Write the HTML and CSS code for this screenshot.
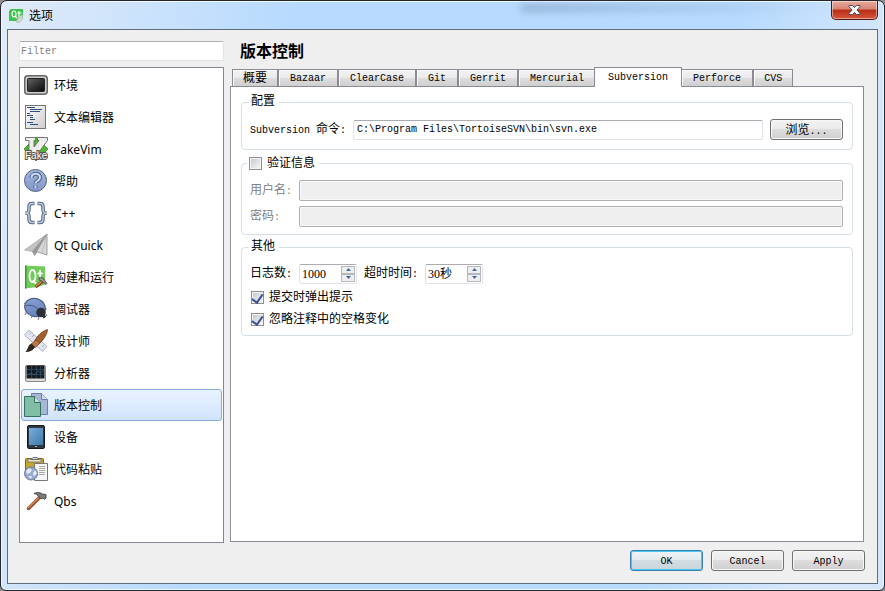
FILE: index.html
```html
<!DOCTYPE html>
<html lang="zh-CN">
<head>
  <meta charset="UTF-8">
  <meta name="viewport" content="width=device-width, initial-scale=1.0">
  <title>选项</title>
  <link rel="stylesheet" href="styles.css">
</head>
<body>
  <div class="window">
    <!-- Title bar -->
    <header class="titlebar">
      <svg class="app-icon" width="15" height="15" viewBox="0 0 15 15">
        <path d="M2 1h12v9l-3 3H0V3z" fill="#3fc34f"/>
        <ellipse cx="5" cy="6" rx="2" ry="3" fill="none" stroke="#fff" stroke-width="1.2"/>
        <path d="M6 8l2 2M10 3v6h2M8.500 5h4" fill="none" stroke="#fff" stroke-width="1.2"/>
        <path d="M14 6l-1 6-3 3-3-1 2-4z" fill="#d5d5cf" stroke="#aaa" stroke-width=".5"/>
      </svg>
      <span class="title">选项</span>
      <span class="glass-shade"></span>
      <button class="close" type="button" aria-label="关闭">
        <svg width="13" height="10" viewBox="0 0 13 10">
          <path d="M1 .5h3.500L6.500 2.500 8.500.5H12v1L9 5l3 3.500v1H8.500l-2-2-2 2H1v-1L4 5 1 1.500z" fill="#fff" stroke="#4d4a5c"/>
        </svg>
      </button>
    </header>

    <main class="client">
      <div class="content">
        <!-- Categories -->
        <aside class="sidebar">
          <input class="field filter" type="text" placeholder="Filter" aria-label="Filter">
          <ul class="categories">
            <li><a href="#">
              <svg width="24" height="24" viewBox="0 0 24 24">
                <defs><linearGradient id="screen" x2="1" y2="1"><stop stop-color="#666"/><stop offset=".5" stop-color="#333"/><stop offset="1" stop-color="#080808"/></linearGradient></defs>
                <rect x=".75" y="2.750" width="22.500" height="18.500" rx="3" fill="#ccc" stroke="#666" stroke-width="1.500"/>
                <rect x="3.500" y="5.500" width="17" height="13" rx="1" fill="url(#screen)" stroke="#222"/>
              </svg>
              <span>环境</span></a></li>
            <li><a href="#">
              <svg width="24" height="24" viewBox="0 0 24 24">
                <defs><linearGradient id="paper" x2="1" y2="1"><stop stop-color="#fff"/><stop offset="1" stop-color="#ccc"/></linearGradient></defs>
                <rect x="1.500" y=".5" width="20" height="23" fill="url(#paper)" stroke="#777"/>
                <path d="M3 2.500h8M6 4.500h12M6 6.500h10M3 8.500h3M3 10.500h6M6 12.500h3M6 14.500h5M3 17.500h6M6 19.500h8" stroke="#2a4d86"/>
              </svg>
              <span>文本编辑器</span></a></li>
            <li><a href="#">
              <svg width="24" height="24" viewBox="0 0 24 24">
                <path d="M12 0l12 12-12 12L0 12z" fill="#4cb830" stroke="#176b17" stroke-width=".6"/>
                <path d="M1.500.5h10v3H10v6.500L15 3.500h-1.500v-3h10v3L12 19H5V3.500H1.500z" fill="#eee" stroke="#666" stroke-width=".9"/>
                <text class="vim-label" x="1" y="22">Fake</text>
              </svg>
              <span>FakeVim</span></a></li>
            <li><a href="#">
              <svg width="24" height="24" viewBox="0 0 24 24">
                <defs><linearGradient id="help" y2="1" x2="0"><stop stop-color="#a3b6da"/><stop offset="1" stop-color="#8397c8"/></linearGradient></defs>
                <circle cx="11.500" cy="11.500" r="11" fill="url(#help)" stroke="#556483"/>
                <path d="M7.500 9C7.500 3.500 16 3.500 16 8.500c0 3.500-4.500 3-4.500 6M11.500 16.500v2.500" fill="none" stroke="#4a5f91" stroke-width="4"/>
                <path d="M7.500 9C7.500 3.500 16 3.500 16 8.500c0 3.500-4.500 3-4.500 6M11.500 16.500v2.500" fill="none" stroke="#d3def2" stroke-width="2"/>
              </svg>
              <span>帮助</span></a></li>
            <li><a href="#">
              <svg width="24" height="24" viewBox="0 0 24 24" fill="none">
                <path d="M10.500 2.500H8C5.500 2.500 5 4 5 6v2c0 2.500-.5 4-3.500 4C4.500 12 5 13.500 5 16v2c0 2 .5 3.500 3 3.500h2.500M13.500 2.500H16c2.500 0 3 1.500 3 3.500v2c0 2.500.5 4 3.500 4-3 0-3.500 1.500-3.500 4v2c0 2-.5 3.500-3 3.500h-2.500" stroke="#56657f" stroke-width="3.500"/>
                <path d="M10 2.500H8C5.500 2.500 5 4 5 6v2c0 2.500-.5 4-3 4 2.500 0 3 1.500 3 4v2c0 2 .5 3.500 3 3.500h2M14 2.500h2c2.500 0 3 1.500 3 3.500v2c0 2.500.5 4 3 4-2.500 0-3 1.500-3 4v2c0 2-.5 3.500-3 3.500h-2" stroke="#b9cbe8" stroke-width="1.500"/>
              </svg>
              <span>C++</span></a></li>
            <li><a href="#">
              <svg width="24" height="24" viewBox="0 0 24 24">
                <path d="M23 1L.5 17l8 1.500z" fill="#c4c4c4" stroke="#999" stroke-width=".6"/>
                <path d="M23 1L8.500 18.500l2 4 3-4z" fill="#9a9a9a" stroke="#888" stroke-width=".6"/>
                <path d="M23 1L12.500 18.500 23 22z" fill="#d8d8d8" stroke="#8c8c8c" stroke-width=".8"/>
                <path d="M23 1l-5 19" stroke="#b0b0b0" stroke-width=".7"/>
              </svg>
              <span>Qt Quick</span></a></li>
            <li><a href="#">
              <svg width="24" height="24" viewBox="0 0 24 24">
                <path d="M1 .5L21 1.500v18L14 22 1 23.500z" fill="#70cb59"/>
                <path d="M1 .5h1.500v23H1z" fill="#3c9a33"/>
                <ellipse cx="8.500" cy="11" rx="3" ry="6" fill="none" stroke="#fff" stroke-width="1.800"/>
                <path d="M9 15l3 4M16 5v8c0 2 1 3 2.500 2.500M13.500 8.500h5" fill="none" stroke="#fff" stroke-width="1.800"/>
                <path d="M20 15l-8.500 7" stroke="#7c371c" stroke-width="3"/>
                <path d="M19.500 15l-8 6.500" stroke="#e08c52" stroke-width="1.500"/>
                <path d="M15 12.500l4 .5 4 5.500-1 1-2-1.500-2-2-3-1z" fill="#999" stroke="#444" stroke-width=".8"/>
              </svg>
              <span>构建和运行</span></a></li>
            <li><a href="#">
              <svg width="24" height="24" viewBox="0 0 24 24">
                <defs><linearGradient id="beetle" x2="1" y2="1"><stop stop-color="#8ea5d3"/><stop offset="1" stop-color="#5e78b5"/></linearGradient></defs>
                <path d="M2.500 14l-1 4M9 18l-2 3M15 20l-1 3M20 12l3 0M22 17l1 2M2 7L0 6" fill="none" stroke="#777"/>
                <ellipse cx="11" cy="10.500" rx="10.500" ry="9" transform="rotate(20 11 10.500)" fill="url(#beetle)" stroke="#42547f"/>
                <path d="M1.500 9c5-2 10 0 14 5" fill="none" stroke="#42547f"/>
                <circle cx="17" cy="15.500" r="4.700" fill="#2a2f38"/>
                <path d="M19 18l2 2.500" stroke="#2a2f38" stroke-width="3"/>
              </svg>
              <span>调试器</span></a></li>
            <li><a href="#">
              <svg width="24" height="24" viewBox="0 0 24 24">
                <path d="M.5 6L5 1l18 16.500-4.500 5z" fill="#e3e6ee" stroke="#a9b0c0"/>
                <path d="M7 3.500L5 5.500M10 6L8 8M13 9l-2 2M17 13l-2 2M20 16l-2 2" stroke="#a0a9bc"/>
                <path d="M23.500.5c0 5-5 12-10 15.500l-3.500-3C13 7 18 2 23.500.5z" fill="#a2602f" stroke="#633719" stroke-width=".7"/>
                <path d="M12 11l4 3-5 5-4-4z" fill="#b87743" stroke="#633719" stroke-width=".5"/>
                <path d="M7.500 14.500l3.500 3.500c-2 4-6 5-9.500 5 3-3 2-7 6-8.500z" fill="#33261e"/>
              </svg>
              <span>设计师</span></a></li>
            <li><a href="#">
              <svg width="24" height="24" viewBox="0 0 24 24">
                <rect x="1.500" y="4.500" width="20" height="16" rx="1.500" fill="#ddd" stroke="#888"/>
                <path d="M2.500 4.500h18v13h-18z" fill="#151d24"/>
                <path d="M3 8.500h17M3 13.500h17M7.500 5v12M12.500 5v12M16.500 5v12" stroke="#3c5b6d" stroke-width=".6"/>
                <path d="M3 14l4-2 3 2 4-4 3 2 3-3" fill="none" stroke="#3f7690" stroke-width=".6"/>
              </svg>
              <span>分析器</span></a></li>
            <li><a class="selected" href="#">
              <svg width="24" height="24" viewBox="0 0 24 24">
                <path d="M7.500.5h10l6 6v15h-16z" fill="#a7b7d8" stroke="#6c7fa8"/>
                <path d="M17.500.5v6h6" fill="#d5ddec" stroke="#6c7fa8"/>
                <path d="M.5 3.500h10l6 6v14H.5z" fill="#80bfa6" stroke="#38705f"/>
                <path d="M10.500 3.500v6h6" fill="#c2e3d7" stroke="#38705f"/>
              </svg>
              <span>版本控制</span></a></li>
            <li><a href="#">
              <svg width="24" height="24" viewBox="0 0 24 24">
                <defs><linearGradient id="tablet" x2="1" y2="1"><stop stop-color="#79aeda"/><stop offset="1" stop-color="#3f78ab"/></linearGradient></defs>
                <rect x="3.500" y=".5" width="17" height="23" rx="1.500" fill="#303942" stroke="#17191d"/>
                <path d="M5 3h14v17H5z" fill="url(#tablet)"/>
                <path d="M11 21.500h2" stroke="#aaa"/>
              </svg>
              <span>设备</span></a></li>
            <li><a href="#">
              <svg width="24" height="24" viewBox="0 0 24 24">
                <rect x="1.500" y="1.500" width="18" height="17" rx="1" fill="#c9a42a" stroke="#806711"/>
                <path d="M4 2h13v3H4z" fill="#e5e2cf" stroke="#666" stroke-width=".7"/>
                <path d="M7 2.500L9 .5h4l2 2z" fill="#ddd" stroke="#555" stroke-width=".8"/>
                <path d="M10.500 6.500h13v17h-13z" fill="#f5f5f5" stroke="#777"/>
                <path d="M15 9.500h6M15 11.500h6M15 13.500h6M15 15.500h6M15 17.500h6" stroke="#aaa"/>
                <circle cx="7" cy="16.500" r="6.500" fill="#96abd0" stroke="#6a7898"/>
                <path d="M2 14l3-3 3 2-2 3-3 1zM9 16l2-3 2 3-2 3-2-1zM4 19l4 0-1 3z" fill="#e4eaf4"/>
              </svg>
              <span>代码粘贴</span></a></li>
            <li><a href="#">
              <svg width="24" height="24" viewBox="0 0 24 24">
                <path d="M15 9L4.500 19.500" stroke="#8c5233" stroke-width="3.500" stroke-linecap="round"/>
                <path d="M15 8.500L4 19" stroke="#dc8450" stroke-width="1.500"/>
                <path d="M10 4.500c3-1.500 6-1.500 8.500.5l3.500.5v3.500l-1.500 1.500-1.500-1.500-2 1-3-3c-1-1.500-2-2-4-2.500z" fill="#77797b" stroke="#3c3e40" stroke-width=".8"/>
              </svg>
              <span>Qbs</span></a></li>
          </ul>
        </aside>

        <!-- Version control page -->
        <section class="page">
          <h1>版本控制</h1>
          <div class="tabs" role="tablist">
            <button class="tab cjk" type="button" role="tab">概要</button>
            <button class="tab" type="button" role="tab">Bazaar</button>
            <button class="tab" type="button" role="tab">ClearCase</button>
            <button class="tab" type="button" role="tab">Git</button>
            <button class="tab" type="button" role="tab">Gerrit</button>
            <button class="tab" type="button" role="tab">Mercurial</button>
            <button class="tab active" type="button" role="tab" aria-selected="true">Subversion</button>
            <button class="tab" type="button" role="tab">Perforce</button>
            <button class="tab" type="button" role="tab">CVS</button>
          </div>
          <div class="pane" role="tabpanel">
            <fieldset>
              <legend>配置</legend>
              <div class="row command-row">
                <label for="command">Subversion <span class="cjk">命令</span>:</label>
                <input class="field" id="command" type="text" value="C:\Program Files\TortoiseSVN\bin\svn.exe">
                <button class="button" type="button"><span class="cjk">浏览</span>...</button>
              </div>
            </fieldset>

            <fieldset>
              <legend class="checkable"><input type="checkbox" id="auth"><label for="auth">验证信息</label></legend>
              <div class="credentials">
                <label for="user"><span class="cjk">用户名</span>:</label>
                <input class="field" id="user" type="text" disabled>
                <label for="password"><span class="cjk">密码</span>:</label>
                <input class="field" id="password" type="password" disabled>
              </div>
            </fieldset>

            <fieldset>
              <legend>其他</legend>
              <div class="misc">
                <div class="row">
                  <label for="log-count"><span class="cjk">日志数</span>:</label>
                  <div class="field spinbox">
                    <input id="log-count" type="text" value="1000">
                    <div class="arrows">
                      <button type="button" aria-label="增加"><svg width="5" height="3"><path d="M0 3l2.500-3L5 3z"/></svg></button>
                      <button type="button" aria-label="减少"><svg width="5" height="3"><path d="M0 0h5L2.500 3z"/></svg></button>
                    </div>
                  </div>
                  <label for="timeout"><span class="cjk">超时时间</span>:</label>
                  <div class="field spinbox">
                    <input id="timeout" type="text" value="30秒">
                    <div class="arrows">
                      <button type="button" aria-label="增加"><svg width="5" height="3"><path d="M0 3l2.500-3L5 3z"/></svg></button>
                      <button type="button" aria-label="减少"><svg width="5" height="3"><path d="M0 0h5L2.500 3z"/></svg></button>
                    </div>
                  </div>
                </div>
                <div class="check-row"><input type="checkbox" id="prompt" checked><label for="prompt">提交时弹出提示</label></div>
                <div class="check-row"><input type="checkbox" id="whitespace" checked><label for="whitespace">忽略注释中的空格变化</label></div>
              </div>
            </fieldset>
          </div>
        </section>
      </div>

      <!-- Dialog buttons -->
      <footer class="actions">
        <button class="button default" type="button">OK</button>
        <button class="button" type="button">Cancel</button>
        <button class="button" type="button">Apply</button>
      </footer>
    </main>
  </div>
</body>
</html>
```

FILE: styles.css
```css
/* General Styles */
* {
  box-sizing: border-box;
}

body {
  margin: 0;
  background-color: #8d8d8d;
  color: #000;
  font-family: "Liberation Mono", "Noto Sans CJK SC", monospace;
  font-size: 10px;
  line-height: 18px;
}

button,
input {
  margin: 0;
  padding: 0;
  color: inherit;
  font: inherit;
}

.cjk {
  font-size: 12px;
}

/* Window frame */
.window {
  display: flex;
  flex-direction: column;
  min-height: 100vh;
  padding: 0 6px 6px;
  border: 1px solid #25262e;
  border-radius: 7px 7px 6px 6px;
  background: linear-gradient(100deg, #dfebf8 0, #cfe4fb 12%, #b7dafe 30%, #b7dafe 75%, #d3e6fc 90%);
  box-shadow: inset 0 0 0 1px #f0f8ff;
}

.titlebar {
  display: flex;
  align-items: center;
  height: 28px;
  padding-left: 2px;
}

.app-icon {
  margin-right: 5px;
}

.title {
  font-family: "Noto Sans CJK SC", sans-serif;
  font-size: 12px;
}

.glass-shade {
  width: 310px;
  height: 6px;
  margin: 0 0 14px auto;
  background: linear-gradient(90deg, #56708c, transparent);
  filter: blur(4px);
  opacity: 0.5;
}

.close {
  display: flex;
  align-items: center;
  align-self: flex-start;
  justify-content: center;
  width: 47px;
  height: 19px;
  border: 1px solid #521713;
  border-top: 0;
  border-radius: 0 0 5px 5px;
  background: linear-gradient(#e9aa9c, #d88473 45%, #b92d16 50%, #d4573c);
  box-shadow: inset 0 0 0 1px rgba(255, 255, 255, 0.45);
}

/* Client area */
.client {
  display: flex;
  flex: 1;
  flex-direction: column;
  padding: 11px 12px 12px 11px;
  border: 1px solid #606c7b;
  background-color: #efefef;
}

.content {
  display: flex;
  flex: 1;
  gap: 6px;
}

/* Text fields and buttons */
.field {
  height: 20px;
  padding: 0 3px;
  border: 1px solid #e2e3ea;
  border-top-color: #abadb3;
  border-radius: 2px;
  background-color: #fff;
}

.field::placeholder {
  color: #808080;
  opacity: 1;
}

.field:disabled {
  height: 21px;
  border-color: #afafaf;
  background-color: #efefef;
  box-shadow: inset 0 0 0 1px #f8f8f8;
}

.button {
  width: 73px;
  height: 21px;
  padding-top: 2px;
  border: 1px solid #707070;
  border-radius: 3px;
  background: linear-gradient(#f2f2f2, #ebebeb 48%, #dddddd 50%, #cfcfcf);
  box-shadow: inset 0 0 0 1px #f8f8f8;
}

.button.default {
  border-color: #3c7fb1;
  background: linear-gradient(#eef3f5, #e2ebef 48%, #d2dde3 50%, #c9d5dc);
  box-shadow: inset 0 0 0 1px #48c8ee;
}

input[type="checkbox"] {
  display: flex;
  justify-content: center;
  width: 13px;
  height: 13px;
  border: 1px solid #8e8f8f;
  background: linear-gradient(135deg, #c6cad1, #f6f6f6) 50% / 9px 9px no-repeat #f4f4f4;
  appearance: none;
}

input[type="checkbox"]:checked::after {
  width: 5px;
  height: 9px;
  border: solid #3d5595;
  border-width: 0 2px 2px 0;
  content: "";
  transform: rotate(35deg);
}

/* Sidebar */
.sidebar {
  display: flex;
  flex-direction: column;
  width: 205px;
  gap: 6px;
}

.filter {
  padding: 0 1px;
}

.categories {
  flex: 1;
  margin: 0;
  padding: 1px;
  border: 1px solid #828790;
  background-color: #fff;
  list-style: none;
}

.categories a {
  display: flex;
  align-items: center;
  height: 32px;
  padding-left: 2px;
  gap: 6px;
  border: 1px solid transparent;
  border-radius: 3px;
  color: #000;
  font-family: "Noto Sans", "Noto Sans CJK SC", sans-serif;
  font-size: 12px;
  text-decoration: none;
}

.categories span,
legend,
.check-row label,
.row label,
.credentials label {
  padding-top: 2px;
}

.categories .selected {
  border-color: #84acdd;
  background: linear-gradient(#eaf3ff, #cfe4fe);
}

.vim-label {
  fill: #fff;
  stroke: #555;
  stroke-width: 2px;
  paint-order: stroke;
  font-family: "Liberation Sans", sans-serif;
  font-size: 10px;
}

/* Page and tabs */
.page {
  display: flex;
  flex: 1;
  flex-direction: column;
  min-width: 0;
}

h1 {
  margin: 0 0 7px;
  padding-left: 10px;
  font-family: "Noto Sans CJK SC", sans-serif;
  font-size: 16px;
  line-height: 19px;
}

.tabs {
  display: flex;
  align-items: flex-end;
  height: 19px;
  padding-left: 2px;
}

.tab {
  height: 17px;
  padding: 0 11px;
  border: 1px solid #898c95;
  border-bottom: 0;
  background: linear-gradient(#f2f2f2, #ebebeb 48%, #dddddd 50%, #cfcfcf);
  box-shadow: inset 1px 1px 0 #fafafa;
  line-height: 17px;
}

.tab.cjk {
  padding: 1px 10px 0;
}

.tab.active {
  z-index: 1;
  height: 20px;
  margin: 0 -1px -1px -2px;
  padding: 0 13px 1px;
  background: #fff;
}

.tab:last-child {
  padding: 0 10px;
}

.pane {
  display: flex;
  flex: 1;
  flex-direction: column;
  margin: 0 1px 1px 0;
  padding: 7px 10px;
  gap: 4px;
  border: 1px solid #898c95;
  background-color: #fff;
}

/* Option groups */
fieldset {
  min-width: 0;
  margin: 0;
  padding: 7px 9px 7px 8px;
  border: 1px solid #d5dfe5;
  border-radius: 4px;
}

legend {
  margin-left: -1px;
  padding: 0 4px 0 2px;
  font-size: 12px;
  line-height: 17px;
}

.checkable,
.check-row {
  display: flex;
  align-items: center;
  gap: 5px;
}

.checkable {
  margin-left: -3px;
  padding-top: 0;
}

.checkable label {
  padding-top: 2px;
}

.row {
  display: flex;
  align-items: center;
  height: 21px;
  gap: 7px;
}

.command-row {
  margin: 1px 0 2px;
}

.row label {
  white-space: nowrap;
}

.command-row .field {
  flex: 1;
  min-width: 0;
}

.credentials {
  display: grid;
  grid-template-columns: auto 1fr;
  align-items: center;
  column-gap: 7px;
  row-gap: 5px;
  color: #808080;
}

.misc {
  display: flex;
  flex-direction: column;
  gap: 4px;
}

.check-row {
  height: 18px;
  padding-left: 1px;
  font-size: 12px;
}

.spinbox {
  display: flex;
  width: 58px;
  padding: 0 1px 0 2px;
}

.spinbox input {
  flex: 1;
  min-width: 0;
  border: 0;
  outline: 0;
  background: none;
  font-family: "Liberation Serif", "Noto Sans CJK SC", serif;
  font-size: 12px;
}

.arrows {
  display: flex;
  flex-direction: column;
  padding: 1px 0;
}

.arrows button {
  display: flex;
  flex: 1;
  align-items: center;
  justify-content: center;
  width: 14px;
  border: 1px solid #b5b8be;
  background-color: #eee;
}

.arrows path {
  fill: #4a64a8;
}

/* Bottom buttons */
.actions {
  display: flex;
  justify-content: flex-end;
  padding-top: 7px;
  gap: 8px;
}
```
